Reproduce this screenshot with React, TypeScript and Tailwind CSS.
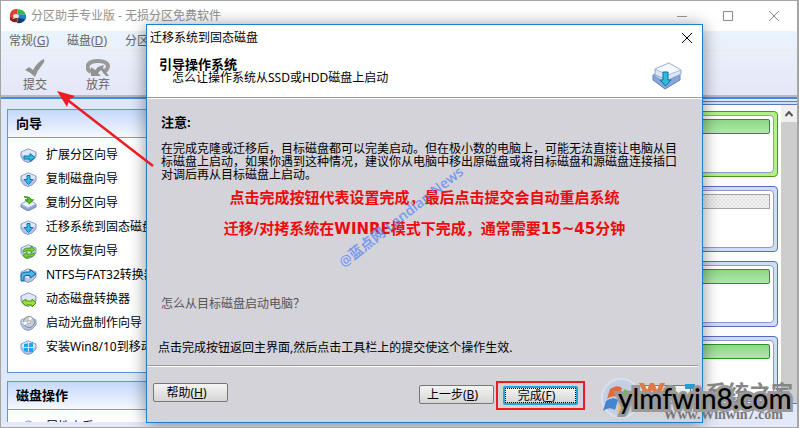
import React, { useState } from "react";

const UI = "font-['Noto_Sans','Noto_Sans_CJK_SC',sans-serif]";

function Key({ k }: { k: string }) {
  return (
    <span>
      (<span className="underline">{k}</span>)
    </span>
  );
}

type Glyph = "right" | "down" | "drop" | "recycle" | "curve" | "swap" | "disc" | "win";

function WizardIcon({ glyph }: { glyph: Glyph }) {
  return (
    <svg viewBox="0 0 17 15" className="h-[15px] w-[17px] shrink-0" aria-hidden="true">
      {glyph === "drop" ? (
        <>
          <path d="M1 8 9 4l7 4v3l-8 4-7-4z" fill="#8fa6d3" stroke="#7188bd" />
          <path d="m1 8 8-4 7 4-8 4z" fill="#eef2fb" stroke="#a9b8da" />
        </>
      ) : (
        <>
          <path d="M1 4 8.500.8 16 4v5l-4 4-4 1.500L4 13 1 9z" fill="#b4c4e8" stroke="#879ccc" />
          <path d="m2 4 6.500-2.500L15 4v3l-6.500 4L2 7z" fill="#dfe7f8" />
        </>
      )}
      {glyph === "right" && <path d="M4 8h6V5.500l5 4-5 4V11H4z" fill="#27c4dc" stroke="#1171ab" />}
      {glyph === "down" && <path d="M7 3.500h3v4h3l-4.500 5-4.500-5h3z" fill="#36bce6" stroke="#1e69b2" />}
      {glyph === "drop" && <path d="M4 .8q4 0 4 3H5l4.500 4 4-4H11q0-3-7-3" fill="#54c51b" stroke="#318a16" />}
      {glyph === "recycle" && (
        <path d="M3 8q0-4 5-4h3V2l4 3.500L11 9V7H8Q5 7 3 8m12 2q-1 3-5 3H7v2l-4-3.500L7 8v2h3q3 0 5-1" fill="#76d028" stroke="#368d19" strokeWidth=".8" />
      )}
      {glyph === "curve" && <path d="M1 13V8q0-4 5-4h4V1.500L16 6l-6 4V7.500H6Q4 7.500 4 9v4z" fill="#49b9e9" stroke="#16599d" />}
      {glyph === "swap" && <path d="m2 10 4-3v2h6V7l4 4-4 4v-2H6v1z" fill="#a5df35" stroke="#4b9712" />}
      {glyph === "disc" && (
        <>
          <circle cx="9" cy="6" r="5.500" fill="#c9ced1" stroke="#848e98" />
          <path d="M9 6V1l3 1zM9 6l-5 3-1-3z" fill="#fff" />
          <circle cx="9" cy="6" r="1.500" fill="#fff" stroke="#8b949c" strokeWidth=".7" />
        </>
      )}
      {glyph === "win" && <path d="m4 4 4-.7V7H4zm5-.8 4-.7V7H9zM4 8h4v4l-4-.7zm5 0h4v4.500L9 12z" fill="#16a8ed" />}
    </svg>
  );
}

const wizards: { glyph: Glyph; label: string }[] = [
  { glyph: "right", label: "扩展分区向导" },
  { glyph: "down", label: "复制磁盘向导" },
  { glyph: "drop", label: "复制分区向导" },
  { glyph: "down", label: "迁移系统到固态磁盘" },
  { glyph: "recycle", label: "分区恢复向导" },
  { glyph: "curve", label: "NTFS与FAT32转换器" },
  { glyph: "swap", label: "动态磁盘转换器" },
  { glyph: "disc", label: "启动光盘制作向导" },
  { glyph: "win", label: "安装Win8/10到移动设备" },
];

const disks = [
  { id: 1, selected: true, free: false },
  { id: 2, selected: false, free: true },
  { id: 3, selected: false, free: false },
  { id: 4, selected: false, free: false },
];

function TitleBar() {
  return (
    <header className="flex h-[30px] shrink-0 items-center bg-white pl-2 text-[#929292]">
      <svg viewBox="0 0 18 16" className="h-4 w-[18px] shrink-0" aria-hidden="true">
        <path d="M1 6Q2 1 8 1l1 6-4 3-4 2z" fill="#e0412f" />
        <path d="M8 1q7 0 9 6L9 6z" fill="#35b54a" />
        <path d="m9 6 8 1q1 6-5 8l-3-5z" fill="#2580c8" />
        <path d="M1 9v3q3 3 7 2l1-5-5 2z" fill="#8e1d1d" />
        <path d="m9 10 7 1q-3 5-8 4z" fill="#173a68" />
        <ellipse cx="7" cy="8" rx="3" ry="2" fill="#d9eee0" />
      </svg>
      <h1 className="ml-1 grow text-[12px] whitespace-nowrap">分区助手专业版 - 无损分区免费软件</h1>
      <button aria-label="最小化" className="flex w-[46px] justify-center">
        <svg viewBox="0 0 10 10" className="size-[10px]"><path d="M0 5.500h10" stroke="#999" /></svg>
      </button>
      <button aria-label="最大化" className="flex w-[46px] justify-center">
        <svg viewBox="0 0 10 10" className="size-[10px]"><path d="M.5.5h9v9h-9z" fill="none" stroke="#888" /></svg>
      </button>
      <button aria-label="关闭" className="flex w-[46px] justify-center">
        <svg viewBox="0 0 10 10" className="size-[10px]"><path d="m0 0 10 10M10 0 0 10" stroke="#888" /></svg>
      </button>
    </header>
  );
}

function Toolbar() {
  return (
    <div className="shrink-0 border-b-2 border-[#3c8ee2] bg-linear-to-b from-[#eaf4fd] to-[#e6e6f6] text-[12px] text-[#666]">
      <nav className="flex h-5 items-center gap-[18px] border-b border-[#efe9e9] pl-2 whitespace-nowrap">
        <button>常规<Key k="G" /></button>
        <button>磁盘<Key k="D" /></button>
        <button>分区<Key k="P" /></button>
      </nav>
      <div className="flex h-[46px] gap-[39px] border-b-2 border-[#b5b9c7] pt-2 pl-[22px]">
        <button className="flex flex-col items-center leading-4">
          <svg viewBox="0 0 20 18" className="h-[18px] w-5"><path d="m0 11 4-3 4 3Q12 3 19 0q1 3-2 6-5 6-7 12Q5 13 0 11" fill="#929292" /></svg>
          提交
        </button>
        <button className="flex flex-col items-center leading-4">
          <svg viewBox="0 0 24 18" className="h-[18px] w-6">
            <path d="M5 13Q0 10 2 6q2-4 10-4 9 0 10 5 0 4-5 6" fill="none" stroke="#999" strokeWidth="4" />
            <path d="M5 8v9h10l-3-3 3-3 5 6h3l-6-8 1-3-6 2-3 3z" fill="#929292" />
          </svg>
          放弃
        </button>
      </div>
    </div>
  );
}

function SidePanel({ title, children }: { title: string; children: React.ReactNode }) {
  return (
    <section className="shrink-0 border border-[#6794d4] bg-white">
      <h2 className="flex h-7 items-center border-b border-[#6ba0dd] bg-linear-to-b from-[#c5d8fb] to-[#f5f8ff] pl-2 text-[13px] font-bold">
        {title}
      </h2>
      {children}
    </section>
  );
}

function Sidebar() {
  return (
    <aside className="mb-[5px] flex w-[231px] shrink-0 flex-col gap-2 overflow-hidden bg-[#dfe7fa] px-[6px] pt-2">
      <SidePanel title="向导">
        <ul className="pt-[5px] pb-[13px] pl-3 text-[12px]">
          {wizards.map((w) => (
            <li key={w.label}>
              <button className="flex h-6 items-center gap-[9px] whitespace-nowrap">
                <WizardIcon glyph={w.glyph} />
                {w.label}
              </button>
            </li>
          ))}
        </ul>
      </SidePanel>
      <SidePanel title="磁盘操作">
        <ul className="pt-[5px] pl-3 text-[12px]">
          <li>
            <button className="flex h-6 items-center gap-[9px]">
              <WizardIcon glyph="down" />
              属性查看
            </button>
          </li>
        </ul>
      </SidePanel>
    </aside>
  );
}

function Legend({ swatch, label }: { swatch: string; label: string }) {
  return (
    <span className="flex w-[151px] shrink-0 items-center gap-[6px]">
      <i className={`size-[14px] ${swatch}`} />
      {label}
    </span>
  );
}

function DiskMap() {
  return (
    <main className="flex min-w-0 grow flex-col">
      <div className="h-1 shrink-0 border-y border-[#5d77c5] bg-[#d1dcf5]" />
      <div className="flex min-h-0 grow border-b border-[#5d77c5] bg-white">
        <div className="flex grow flex-col gap-[9px] overflow-hidden pt-[6px] pr-[3px] pl-2">
          {disks.map((d) => (
            <div
              key={d.id}
              className={
                d.selected
                  ? "h-[66px] shrink-0 rounded border border-[#4d981f] bg-[#b3f087] p-[3px]"
                  : "h-[66px] shrink-0 rounded border border-[#5270bd] bg-[#d1dcf5] p-[3px]"
              }
            >
              <div className="h-full rounded border border-[#919bc8] bg-white p-[3px]">
                <div
                  className={
                    d.free
                      ? "h-[15px] border border-[#aaa29e] bg-[repeating-conic-gradient(#e3e3e3_0_25%,#f2f2f2_0_50%)] bg-size-[4px_4px]"
                      : "h-[15px] rounded-xs border border-[#289522] bg-linear-to-b from-[#8bd886] to-[#b0e7ab]"
                  }
                />
              </div>
            </div>
          ))}
        </div>
        <div className="w-4 shrink-0 bg-[#cdcdcd]">
          <button aria-label="向上滚动" className="flex h-[17px] w-full items-center justify-center bg-[#f0f0f0]">
            <svg viewBox="0 0 8 6" className="h-[6px] w-2"><path d="m.5 5 3.500-4 3.500 4" fill="none" stroke="#555" strokeWidth="2" /></svg>
          </button>
        </div>
      </div>
      <footer className="flex h-[23px] shrink-0 items-center overflow-hidden bg-[#e3e9f8] pl-[2px] text-[12px] whitespace-nowrap">
        <Legend swatch="bg-[#38a838]" label="主分区" />
        <Legend swatch="bg-[#3544b8]" label="逻辑分区" />
        <Legend swatch="bg-[#b99b84]" label="未分配空间" />
      </footer>
    </main>
  );
}

const pushButton =
  "h-[19px] w-[75px] rounded-xs border border-[#777] bg-linear-to-b from-[#f4f4f4] to-[#d5d5d5] pr-2 text-[12px] leading-4 whitespace-nowrap";

function MigrateDialog({ onClose }: { onClose: () => void }) {
  return (
    <div
      role="dialog"
      aria-labelledby="dialog-title"
      className="absolute top-[23px] left-[145px] flex h-[399px] w-[557px] flex-col border border-[#1a80d2] bg-[#d4d3da] text-[12px] text-black shadow-[0_2px_16px_rgba(0,0,0,0.45)]"
    >
      <div className="flex h-[25px] shrink-0 items-center justify-between bg-white pr-[9px] pl-[3px]">
        <h2 id="dialog-title">迁移系统到固态磁盘</h2>
        <button aria-label="关闭对话框" onClick={onClose}>
          <svg viewBox="0 0 12 12" className="size-3"><path d="m1 1 10 10M11 1 1 11" stroke="#000" /></svg>
        </button>
      </div>
      <div className="flex h-12 shrink-0 justify-between border-b border-[#999] bg-white pr-5 pl-3">
        <div className="pt-2">
          <h3 className="text-[13px] leading-3 font-bold">引导操作系统</h3>
          <p className="pl-[13px] leading-4">怎么让操作系统从SSD或HDD磁盘上启动</p>
        </div>
        <svg viewBox="0 0 30 28" className="mt-3 h-7 w-[30px]" aria-hidden="true">
          <path d="m1 13 15-6 12 6v5l-15 9L1 18z" fill="#86a5da" stroke="#6886bd" />
          <path d="m1 13 15-6 12 6-15 8z" fill="#c5d8f5" stroke="#7793c8" />
          <path d="m3 7 14-6 12 7v4l-13 6-13-5z" fill="#dbe6f8" stroke="#8da5d3" />
          <path d="m3 7 14-6 12 7-13 5z" fill="#f5f8ff" stroke="#a9bade" />
          <path d="M11 10h5v8h3l-5.500 6L8 18h3z" fill="#2cbcdc" stroke="#176b9d" />
        </svg>
      </div>
      <div className="border-t border-white px-[14px] pt-[15px]">
        <h3 className="text-[13px] leading-4 font-bold">注意:</h3>
        <p className="mt-3 leading-[13px]">
          在完成克隆或迁移后，目标磁盘都可以完美启动。但在极小数的电脑上，可能无法直接让电脑从目标磁盘上启动，如果你遇到这种情况，建议你从电脑中移出原磁盘或将目标磁盘和源磁盘连接插口对调后再从目标磁盘上启动。
        </p>
      </div>
      <div className="pt-[2px] text-center font-['DejaVu_Sans','Noto_Sans_CJK_SC',sans-serif] text-[15px] leading-[31px] font-bold whitespace-nowrap text-[#ed0a0a]">
        <p>点击完成按钮代表设置完成，最后点击提交会自动重启系统</p>
        <p>迁移/对拷系统在WINRE模式下完成，通常需要15~45分钟</p>
      </div>
      <a href="#boot-help" className="mt-auto self-start pl-[14px] leading-4 text-[#555]">怎么从目标磁盘启动电脑？</a>
      <p className="mt-7 mb-[9px] pl-[11px] leading-4">点击完成按钮返回主界面,然后点击工具栏上的提交使这个操作生效.</p>
      <div className="mr-1 flex h-[57px] shrink-0 items-start border-t border-[#999] pt-[17px] pr-[7px] pl-[6px] shadow-[inset_0_1px_0_#fff]">
        <button className={pushButton}>帮助<Key k="H" /></button>
        <button className={`${pushButton} mt-[2px] ml-auto`}>上一步<Key k="B" /></button>
        <div className="-mt-[2px] ml-[2px] border-2 border-[#ed1c24] px-[5px] py-[3px]">
          <button onClick={onClose} className="block h-[19px] w-[75px] rounded-xs border-2 border-[#22a6da] bg-linear-to-b from-[#f4f4f4] to-[#d5d5d5] pr-2 leading-[14px] outline-1 -outline-offset-3 outline-dotted outline-black">
            完成<Key k="F" />
          </button>
        </div>
        <button aria-label="取消" onClick={onClose} className={`${pushButton} mt-[2px] ml-[31px]`} />
      </div>
      <span className="absolute top-[181px] left-[177px] -rotate-38 font-['Open_Sans','Noto_Sans_CJK_SC',sans-serif] text-[14px] font-semibold whitespace-nowrap text-[#5b87f5]/75">
        @蓝点网 Landian News
      </span>
    </div>
  );
}

function Watermark() {
  return (
    <div className="pointer-events-none absolute right-0 bottom-1 h-[48px] w-[196px]">
      <svg viewBox="0 0 196 48" className="absolute inset-0" aria-hidden="true">
        <circle cx="20" cy="23" r="19" fill="#c3cfe4" stroke="#dbe1ec" strokeWidth="2" />
        <path d="M9 14q7-5 12-1l-3 10q-6-4-12 1z" fill="#e06a39" />
        <path d="M23 14q6 4 12 0l-3 10q-6 4-12 0z" fill="#73b849" />
        <path d="M5 26q7-5 12-1l-3 10q-6-4-12 1z" fill="#4385ce" />
        <path d="M19 26q6 4 12 0l-3 10q-6 4-12 0z" fill="#f0c43c" />
        <path d="m38 8 5 0 3 7 3-7h4l3 7 3-7h5l-6 14h-4l-3-7-3 7h-4z" fill="#e07a45" />
        <circle cx="72" cy="14" r="3" fill="#73b849" />
        <path d="M84 9h10v5H84z" fill="#2a9bd0" />
      </svg>
      <span className="absolute top-1 right-1 font-['Noto_Sans_CJK_SC',sans-serif] text-[22px] leading-6 font-bold whitespace-nowrap text-[#858585]">系统之家</span>
      <span className="absolute right-[14px] bottom-0 font-['Liberation_Serif',serif] text-[14px] leading-4 font-bold text-[#777]">Www.Winwin7.com</span>
      <span className="absolute top-[7px] left-[17px] font-['Lato',sans-serif] text-[28px] leading-8 font-medium text-black [paint-order:stroke] [-webkit-text-stroke:6px_#999]">ylmfwin8.com</span>
    </div>
  );
}

export default function App() {
  const [open, setOpen] = useState(true);
  return (
    <div className={`relative flex h-screen flex-col overflow-hidden border border-r-2 border-[#a5a5a5] ${UI} text-black`}>
      <TitleBar />
      <Toolbar />
      <div className="flex min-h-0 grow bg-[#e3e9fa] pt-[2px]">
        <Sidebar />
        <DiskMap />
      </div>
      {open && <MigrateDialog onClose={() => setOpen(false)} />}
      <svg viewBox="0 0 100 81" className="pointer-events-none absolute top-[89px] left-[55px] h-[81px] w-[100px]" aria-hidden="true">
        <path d="M9 8 97 76" stroke="#ed1c24" strokeWidth="2.500" />
        <path d="m1 1 18 5-6 4-2 7z" fill="#ed1c24" />
      </svg>
      <Watermark />
    </div>
  );
}
